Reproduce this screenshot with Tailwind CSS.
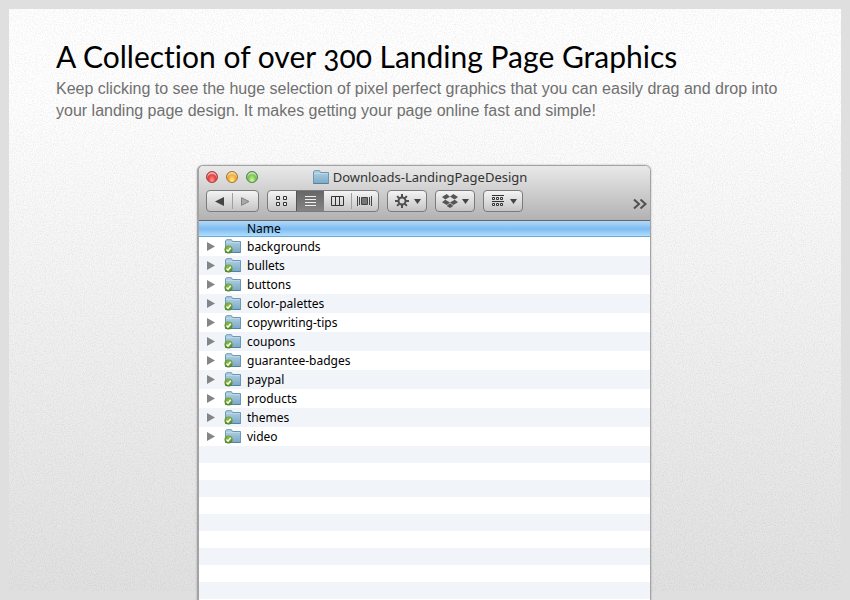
<!DOCTYPE html>
<html lang="en">
<head>
<meta charset="utf-8">
<meta name="viewport" content="width=device-width, initial-scale=1">
<title>Landing Page Graphics</title>
<script src="https://cdn.jsdelivr.net/npm/@tailwindcss/browser@4"></script>
</head>
<body class="h-screen overflow-hidden bg-[#dfdfdf] p-[9px]">
<svg class="absolute size-0" aria-hidden="true">
  <defs>
    <linearGradient id="fold" x1="0" y1="0" x2="0" y2="1"><stop offset="0" stop-color="#b5d3e4"/><stop offset="1" stop-color="#7ba9c5"/></linearGradient>
    <radialGradient id="ok" cx=".5" cy=".3" r=".7"><stop offset="0" stop-color="#8fbd4c"/><stop offset="1" stop-color="#4b8420"/></radialGradient>
    <symbol id="folder" viewBox="0 0 16 14">
      <path d="M.5 13.5V2L1.5.7h5L7.500 2.500H15.500V13.500Z" fill="url(#fold)" stroke="#6b98b4"/>
      <path d="M1 3.500H15" stroke="#bcd7e6" stroke-width="1"/>
      <path d="M.5 13.500H15.500" stroke="#55839f"/>
    </symbol>
    <symbol id="synced" viewBox="0 0 17 15">
      <use href="#folder" x="1" y="0" width="16" height="14"/>
      <circle cx="4.500" cy="10.500" r="4" fill="url(#ok)"/>
      <path d="M2.500 10.500 4 12.200 6.800 8.800" fill="none" stroke="#fff" stroke-width="1.500"/>
    </symbol>
    <symbol id="down" viewBox="0 0 7 5"><path d="M0 0H7L3.500 5Z" fill="#444"/></symbol>
  </defs>
</svg>

<main class="relative h-full bg-linear-to-b from-[#ffffff] from-15% to-[#e1e1e1] pl-[47px] pr-[49px] pt-[31px]">
  <svg class="absolute inset-0 h-full w-full" aria-hidden="true">
    <filter id="grain" x="0" y="0" width="100%" height="100%" color-interpolation-filters="sRGB">
      <feTurbulence type="fractalNoise" baseFrequency=".9" numOctaves="2" seed="4"/>
      <feColorMatrix values="0 0 0 0 0  0 0 0 0 0  0 0 0 0 0  .14 0 0 0 -.055"/>
    </filter>
    <rect width="100%" height="100%" filter="url(#grain)"/>
  </svg>

  <div class="relative">
    <header class="h-[125px]">
      <h1 class="whitespace-nowrap font-['Lato',sans-serif] text-[30px] leading-8 text-black [font-variant-ligatures:none] oldstyle-nums">A Collection of over 300 Landing Page Graphics</h1>
      <p class="mt-[6px] font-['Liberation_Sans',Arial,sans-serif] text-[16px] leading-[22px] text-[#707070]">Keep clicking to see the huge selection of pixel perfect graphics that you can easily drag and drop into your landing page design. It makes getting your page online fast and simple!</p>
    </header>

    <section aria-label="Downloads-LandingPageDesign" class="mx-auto w-[454px] max-w-full overflow-hidden rounded-t-md border border-l-2 border-[#a3a3a3] bg-white font-['Noto_Sans',sans-serif] text-[12px] text-black shadow-[0_0_2px_rgba(0,0,0,0.3)]">
      <div class="border-b border-[#666] bg-linear-to-b from-[#e9e9e9] to-[#b2b2b2] pb-2">
        <div class="grid h-[22px] grid-cols-[1fr_auto_1fr] items-center pl-[7px] pr-4">
          <div class="flex gap-2">
            <button aria-label="Close" class="size-3 rounded-full border border-[#a33c3c] bg-radial-[at_50%_85%] from-[#ff9d94] via-[#e8403e] to-[#bd2f32] shadow-[inset_0_2px_1px_rgba(255,255,255,0.6)]"></button>
            <button aria-label="Minimize" class="size-3 rounded-full border border-[#a8762c] bg-radial-[at_50%_85%] from-[#fff090] via-[#f2ae3c] to-[#c78222] shadow-[inset_0_2px_1px_rgba(255,255,255,0.6)]"></button>
            <button aria-label="Zoom" class="size-3 rounded-full border border-[#4d8540] bg-radial-[at_50%_85%] from-[#d2f99f] via-[#7fc75a] to-[#4a9139] shadow-[inset_0_2px_1px_rgba(255,255,255,0.6)]"></button>
          </div>
          <h2 class="flex items-center gap-1 text-[13px] leading-5 text-[#333]"><svg class="h-[14px] w-4"><use href="#folder"/></svg>Downloads-LandingPageDesign</h2>
        </div>
        <div class="flex gap-2 pl-[7px] pr-[3px] pt-[2px]">
          <div class="flex h-[22px] w-[53px] rounded border border-[#7b7b7b] bg-linear-to-b from-[#f4f4f4] to-[#c5c5c5]">
            <button aria-label="Back" class="flex flex-1 items-center justify-center"><svg class="h-[9px] w-[9px]" viewBox="0 0 9 9"><path d="M9 0V9L0 4.500Z" fill="#444"/></svg></button>
            <span class="my-[2px] w-px bg-[#a0a0a0]"></span>
            <button aria-label="Forward" class="flex flex-1 items-center justify-center"><svg class="h-[9px] w-[9px]" viewBox="0 0 9 9"><path d="M.5.7V8.300L8 4.500Z" fill="#aaa" stroke="#808080"/></svg></button>
          </div>
          <div class="flex h-[22px] w-[112px] overflow-hidden rounded border border-[#7b7b7b] bg-linear-to-b from-[#f4f4f4] to-[#c5c5c5]">
            <button aria-label="Icon view" class="flex w-7 items-center justify-center"><svg class="h-[11px] w-3" viewBox="0 0 12 11" fill="#eee" stroke="#333"><path d="M.5.5H3.500V3.500H.5ZM7.500.5H10.500V3.500H7.500ZM.5 6.500H3.500V9.500H.5ZM7.500 6.500H10.500V9.500H7.500Z"/></svg></button>
            <button aria-label="List view" aria-pressed="true" class="flex w-7 items-center justify-center border-l border-[#555] bg-linear-to-b from-[#666] to-[#858585]"><svg class="h-[11px] w-[11px]" viewBox="0 0 11 11" stroke="#eee"><path d="M0 .5H11M0 3.500H11M0 6.500H11M0 9.500H11"/></svg></button>
            <button aria-label="Column view" class="flex flex-1 items-center justify-center"><svg class="h-[10px] w-[13px]" viewBox="0 0 13 10" fill="none" stroke="#333"><path d="M.5.5H12.500V9.500H.5ZM4.500 0V10M8.500 0V10"/></svg></button>
            <span class="my-[2px] w-px bg-[#a0a0a0]"></span>
            <button aria-label="Cover flow view" class="flex flex-1 items-center justify-center"><svg class="h-[10px] w-[15px]" viewBox="0 0 15 10" stroke="#444"><path d="M.5 0V10M2.500 1V9M12.500 1V9M14.500 0V10"/><path d="M4.500 1.500H10.500V8.500H4.500Z" fill="#777"/></svg></button>
          </div>
          <button aria-label="Actions" class="flex h-[22px] w-10 items-center justify-between rounded border border-[#7b7b7b] bg-linear-to-b from-[#f4f4f4] to-[#c5c5c5] pl-[7px] pr-[5px]"><svg class="size-[14px]" viewBox="-7 -7 14 14" stroke="#505050" fill="none"><circle r="3.500" stroke-width="2"/><path stroke-width="2" d="M0-4V-7M0 4V7M-4 0H-7M4 0H7M-2.800-2.800-4.900-4.900M2.800 2.800 4.900 4.900M-2.800 2.800-4.900 4.900M2.800-2.800 4.900-4.900"/></svg><svg class="h-[5px] w-[7px]"><use href="#down"/></svg></button>
          <button aria-label="Dropbox" class="flex h-[22px] w-10 items-center justify-between rounded border border-[#7b7b7b] bg-linear-to-b from-[#f4f4f4] to-[#c5c5c5] pl-[6px] pr-[5px]"><svg class="h-[14px] w-4" viewBox="0 0 16 14" fill="#555"><path d="M4.700 0 8 2.700 3.300 5.500 0 3ZM11.300 0 16 3 12.700 5.500 8 2.700ZM3.300 5.800 8 8.500 4.700 11 0 8.300ZM12.700 5.800 16 8.300 11.300 11 8 8.500ZM8 9.300 11.300 12 8 14 4.700 12Z"/></svg><svg class="h-[5px] w-[7px]"><use href="#down"/></svg></button>
          <button aria-label="Arrange" class="flex h-[22px] w-10 items-center justify-between rounded border border-[#7b7b7b] bg-linear-to-b from-[#f4f4f4] to-[#c5c5c5] pl-2 pr-[5px]"><svg class="h-3 w-3" viewBox="0 0 12 12" stroke="#333" fill="#eee"><path d="M0 .5H12M0 6.500H12" /><path d="M.5 2.500H2.500V4.500H.5ZM4.500 2.500H6.500V4.500H4.500ZM8.500 2.500H10.500V4.500H8.500ZM.5 8.500H2.500V10.500H.5ZM4.500 8.500H6.500V10.500H4.500ZM8.500 8.500H10.500V10.500H8.500Z"/></svg><svg class="h-[5px] w-[7px]"><use href="#down"/></svg></button>
          <button aria-label="More toolbar items" class="ml-auto self-end pb-[3px]"><svg class="h-[10px] w-[14px]" viewBox="0 0 14 10" fill="none" stroke="#505050" stroke-width="2"><path d="M1 .5 6 5 1 9.500M7.500.5 12.500 5 7.500 9.500"/></svg></button>
        </div>
      </div>
      <table class="w-full border-collapse text-left leading-4">
        <thead>
          <tr class="h-4 bg-linear-to-b from-[#b5d8f7] via-[#7dbcf3] via-50% to-[#b9e2fb] shadow-[inset_0_-1px_0_#6aabdc]"><th class="w-12 p-0"></th><th class="p-0 font-normal">Name</th></tr>
        </thead>
        <tbody id="files"></tbody>
      </table>
      <div aria-hidden="true">
        <div class="h-[17px] bg-[#f1f5fa]"></div><div class="h-[17px]"></div>
        <div class="h-[17px] bg-[#f1f5fa]"></div><div class="h-[17px]"></div>
        <div class="h-[17px] bg-[#f1f5fa]"></div><div class="h-[17px]"></div>
        <div class="h-[17px] bg-[#f1f5fa]"></div><div class="h-[17px]"></div>
        <div class="h-[17px] bg-[#f1f5fa]"></div><div class="h-[17px]"></div>
      </div>
    </section>
  </div>
</main>
<script>
const names = ['backgrounds', 'bullets', 'buttons', 'color-palettes', 'copywriting-tips', 'coupons', 'guarantee-badges', 'paypal', 'products', 'themes', 'video'];
document.getElementById('files').innerHTML = names.map(n => `
  <tr class="h-[19px] even:bg-[#f1f5fa]">
    <td class="p-0"><div class="flex items-center justify-between pl-2 pr-[6px]">
      <button aria-label="Expand ${n}" class="h-[9px]"><svg class="h-[9px] w-2" viewBox="0 0 8 9"><path d="M0 0 8 4.500 0 9Z" fill="#858585"/></svg></button>
      <svg class="h-[15px] w-[17px]" aria-hidden="true"><use href="#synced"/></svg>
    </div></td>
    <td class="p-0">${n}</td>
  </tr>`).join('');
</script>
</body>
</html>
